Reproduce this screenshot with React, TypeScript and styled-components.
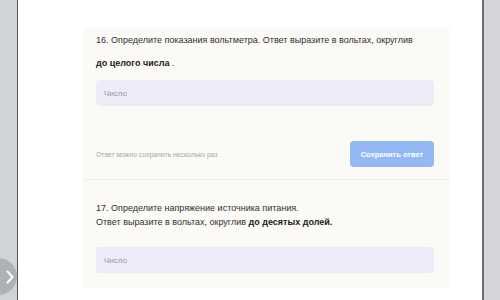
import styled, { createGlobalStyle } from "styled-components";

// ========================================================================================= //
// [ GLOBAL ] ============================================================================== //
// ========================================================================================= //

const GlobalStyle = createGlobalStyle`
  html, body {
    margin: 0;
    padding: 0;
    background: #ffffff;
  }
  body {
    font-family: "Liberation Sans", Arial, sans-serif;
  }
`;

// ========================================================================================= //
// [ STYLED COMPONENTS ] =================================================================== //
// ========================================================================================= //

const Page = styled.div`
  display: flex;
  width: 500px;
  height: 300px;
  overflow: hidden;
`;

const LeftRail = styled.aside`
  position: relative;
  width: 17px;
  flex-shrink: 0;
  background: #d0d3d7;
  border-right: 1px solid #55585c;
  overflow: hidden;
`;

const NextTab = styled.button`
  position: absolute;
  left: -20px;
  top: 258px;
  width: 37px;
  height: 37px;
  border: none;
  border-radius: 50%;
  background: #aeb1b6;
  padding: 0 0 0 22px;
  display: flex;
  align-items: center;
  justify-content: center;
  color: #ffffff;
`;

const Main = styled.main`
  flex: 1;
  background: #ffffff;
  padding: 28px 32px 0 65px;
`;

const RightRail = styled.aside`
  width: 16px;
  flex-shrink: 0;
  background: #d3d5d9;
  border-left: 2px solid #6c6c6c;
`;

const Card = styled.section`
  background: #fbfaf6;
  display: flex;
  flex-direction: column;
`;

const Question = styled.div<{ $top: number; $bottom: number; $divider?: boolean }>`
  padding: ${(p) => p.$top}px 16px ${(p) => p.$bottom}px 13px;
  border-bottom: ${(p) => (p.$divider ? "1px solid #eeede9" : "none")};
`;

const Line = styled.p<{ $gap?: number }>`
  margin: ${(p) => p.$gap ?? 0}px 0 0;
  font-size: 9px;
  line-height: 14px;
  color: #303030;
  white-space: nowrap;
`;

const Strong = styled.b`
  font-weight: 700;
  color: #1a1a1a;
`;

const Field = styled.input<{ $gap: number }>`
  display: block;
  box-sizing: border-box;
  width: 100%;
  height: 26px;
  margin-top: ${(p) => p.$gap}px;
  padding: 0 8px;
  border: none;
  border-radius: 4px;
  background: #edebf8;
  font-family: "Liberation Sans", Arial, sans-serif;
  font-size: 8px;
  outline: none;

  &::placeholder {
    color: #9a9aa2;
  }
`;

const Footer = styled.div`
  margin-top: 35px;
  display: flex;
  align-items: center;
  justify-content: space-between;
`;

const Hint = styled.span`
  font-size: 6.8px;
  color: #a8a8a8;
`;

const SaveButton = styled.button`
  width: 84px;
  height: 26px;
  border: none;
  border-radius: 4px;
  background: #94b8f4;
  color: #ffffff;
  font-family: "Liberation Sans", Arial, sans-serif;
  font-size: 7.5px;
  font-weight: 700;
`;

// ========================================================================================= //
// [ EXPORTED COMPONENT ] ================================================================== //
// ========================================================================================= //

export default function App() {
  return (
    <Page>
      <GlobalStyle />
      <LeftRail>
        <NextTab>
          <svg width="8" height="14" viewBox="0 0 8 14" fill="none">
            <path d="M1.5 1.5 L6.5 7 L1.5 12.5" stroke="#ffffff" strokeWidth="2" strokeLinecap="round" />
          </svg>
        </NextTab>
      </LeftRail>
      <Main>
        <Card>
          <Question $top={5} $bottom={12} $divider>
            <Line>16. Определите показания вольтметра. Ответ выразите в вольтах, округлив</Line>
            <Line $gap={9}>
              <Strong>до целого числа</Strong> .
            </Line>
            <Field $gap={10} placeholder="Число" />
            <Footer>
              <Hint>Ответ можно сохранить несколько раз</Hint>
              <SaveButton>Сохранить ответ</SaveButton>
            </Footer>
          </Question>
          <Question $top={21} $bottom={15}>
            <Line>17. Определите напряжение источника питания.</Line>
            <Line>
              Ответ выразите в вольтах, округлив <Strong>до десятых долей.</Strong>
            </Line>
            <Field $gap={18} placeholder="Число" />
          </Question>
        </Card>
      </Main>
      <RightRail />
    </Page>
  );
}
